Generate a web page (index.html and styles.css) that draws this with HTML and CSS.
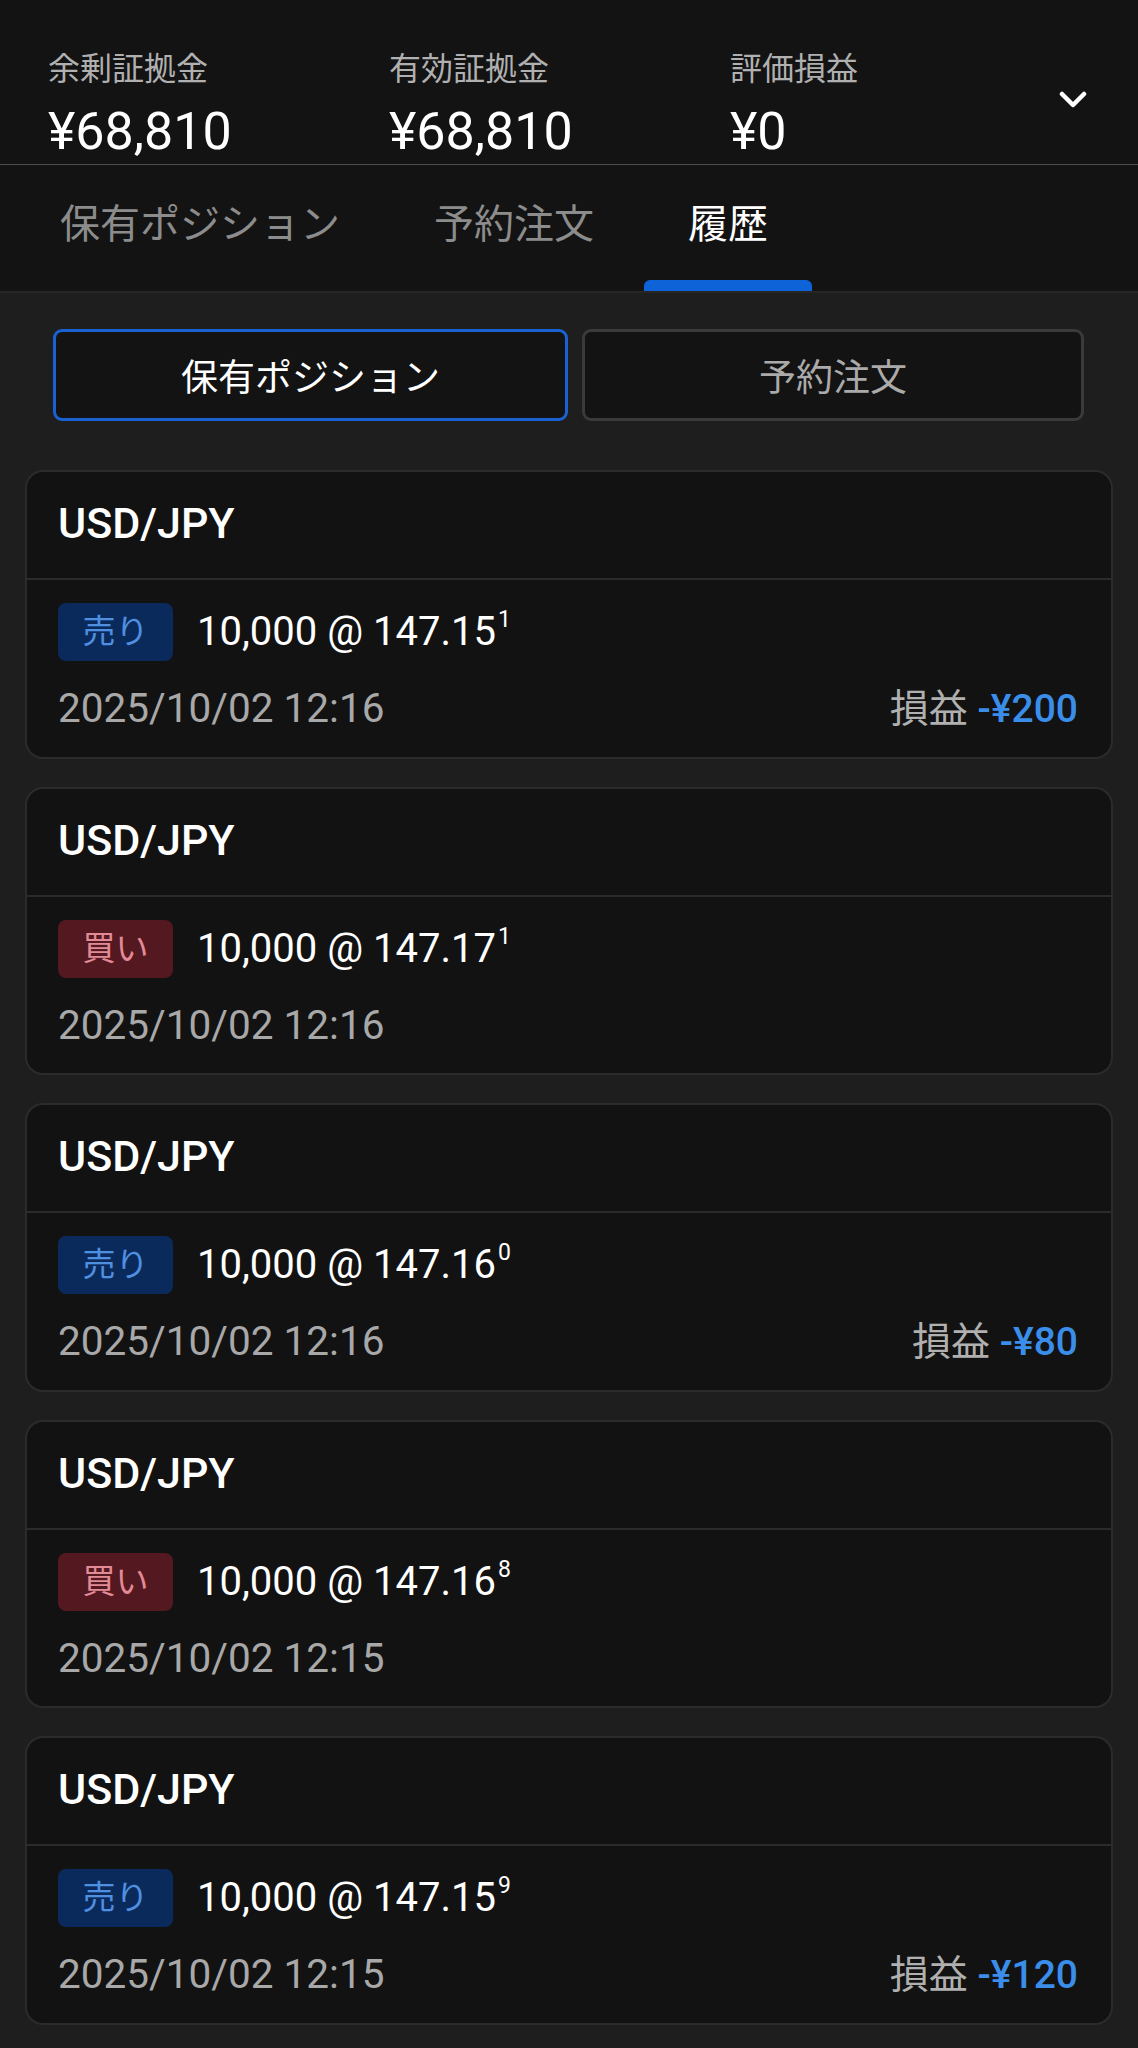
FILE: index.html
```html
<!DOCTYPE html>
<html>
<head>
    <title>履歴</title>
    <link rel="stylesheet" href="styles.css">
</head>
<body>
    <!-- Margin summary -->
    <div class="summary">
        <div class="summary-cols">
            <div class="summary-item">
                <div class="summary-label">余剰証拠金</div>
                <div class="summary-value">¥68,810</div>
            </div>
            <div class="summary-item">
                <div class="summary-label">有効証拠金</div>
                <div class="summary-value">¥68,810</div>
            </div>
            <div class="summary-item">
                <div class="summary-label">評価損益</div>
                <div class="summary-value">¥0</div>
            </div>
        </div>
        <svg class="chevron" width="28" height="18" viewBox="0 0 28 18">
            <polyline points="3,3 14,14 25,3" fill="none" stroke="#fff" stroke-width="4.5" stroke-linecap="round" stroke-linejoin="round"/>
        </svg>
    </div>

    <!-- Main tabs -->
    <div class="tabs">
        <div class="tab">保有ポジション</div>
        <div class="tab">予約注文</div>
        <div class="tab active">履歴</div>
    </div>

    <div class="content">
        <div class="segment">
            <button class="segment-btn selected">保有ポジション</button>
            <button class="segment-btn">予約注文</button>
        </div>

        <div class="card">
            <div class="card-title">USD/JPY</div>
            <div class="card-body">
                <div class="trade-row">
                    <span class="badge sell">売り</span>
                    <span class="price">10,000 @ 147.15<sup>1</sup></span>
                </div>
                <div class="info-row">
                    <span class="date">2025/10/02 12:16</span>
                    <span class="pl">損益 <b>-¥200</b></span>
                </div>
            </div>
        </div>

        <div class="card">
            <div class="card-title">USD/JPY</div>
            <div class="card-body">
                <div class="trade-row">
                    <span class="badge buy">買い</span>
                    <span class="price">10,000 @ 147.17<sup>1</sup></span>
                </div>
                <div class="info-row">
                    <span class="date">2025/10/02 12:16</span>
                </div>
            </div>
        </div>

        <div class="card">
            <div class="card-title">USD/JPY</div>
            <div class="card-body">
                <div class="trade-row">
                    <span class="badge sell">売り</span>
                    <span class="price">10,000 @ 147.16<sup>0</sup></span>
                </div>
                <div class="info-row">
                    <span class="date">2025/10/02 12:16</span>
                    <span class="pl">損益 <b>-¥80</b></span>
                </div>
            </div>
        </div>

        <div class="card">
            <div class="card-title">USD/JPY</div>
            <div class="card-body">
                <div class="trade-row">
                    <span class="badge buy">買い</span>
                    <span class="price">10,000 @ 147.16<sup>8</sup></span>
                </div>
                <div class="info-row">
                    <span class="date">2025/10/02 12:15</span>
                </div>
            </div>
        </div>

        <div class="card">
            <div class="card-title">USD/JPY</div>
            <div class="card-body">
                <div class="trade-row">
                    <span class="badge sell">売り</span>
                    <span class="price">10,000 @ 147.15<sup>9</sup></span>
                </div>
                <div class="info-row">
                    <span class="date">2025/10/02 12:15</span>
                    <span class="pl">損益 <b>-¥120</b></span>
                </div>
            </div>
        </div>
    </div>
</body>
</html>
```

FILE: styles.css
```css
body {
    margin: 0;
    background-color: #1e1e1e;
    color: #fff;
    font-family: Roboto, "Noto Sans CJK JP", sans-serif;
}
.summary {
    display: flex;
    align-items: center;
    background-color: #131313;
    padding: 49px 51px 2px 48px;
    border-bottom: 1px solid #4d4d4d;
}
.summary-cols {
    flex: 1;
    display: grid;
    grid-template-columns: 341px 341px 1fr;
}
.summary-label {
    font-size: 32px;
    line-height: 40px;
    color: #b0b0b0;
}
.summary-value {
    margin-top: 13px;
    font-size: 52px;
    line-height: 60px;
}
.chevron {
    margin-top: -12px;
}
.tabs {
    display: flex;
    height: 126px;
    padding-left: 13px;
    background-color: #131313;
    border-bottom: 2px solid #262626;
}
.tab {
    display: flex;
    flex-direction: column;
    padding: 40px 47px 0;
    font-size: 40px;
    line-height: 40px;
    color: #8c8c8c;
}
.tab.active {
    color: #fff;
}
.tab.active::after {
    content: "";
    display: block;
    margin: auto -44px 0;
    height: 11px;
    border-radius: 6px 6px 0 0;
    background-color: #0f63d8;
}
.content {
    padding: 36px 25px 30px 25px;
}
.segment {
    display: grid;
    grid-template-columns: 515px 1fr;
    gap: 14px;
    margin: 0 29px 49px 28px;
}
.segment-btn {
    height: 92px;
    border: 3px solid #3a3a3a;
    border-radius: 9px;
    background-color: #131313;
    color: #aaa;
    font-family: Roboto, "Noto Sans CJK JP", sans-serif;
    font-size: 37px;
    padding: 0;
}
.segment-btn.selected {
    border-color: #1a62d2;
    color: #fff;
}
.card {
    background-color: #121212;
    border: 2px solid #2b2b2b;
    border-radius: 18px;
    margin-bottom: 28px;
}
.card-title {
    padding: 26px 31px 30px;
    font-size: 43px;
    line-height: 50px;
    font-weight: 500;
    border-bottom: 2px solid #2b2b2b;
}
.card-body {
    padding: 23px 33px 24px 31px;
}
.trade-row {
    display: flex;
    align-items: center;
}
.badge {
    width: 115px;
    height: 58px;
    border-radius: 8px;
    text-align: center;
    font-size: 33px;
    line-height: 58px;
}
.badge.sell {
    background-color: #0b2a5c;
    color: #4f8fe0;
}
.badge.buy {
    background-color: #541820;
    color: #e28a96;
}
.price {
    margin-left: 24px;
    font-size: 40px;
    line-height: 58px;
}
.price sup {
    font-size: 23px;
    line-height: 0;
    vertical-align: 18px;
    margin-left: 2px;
}
.info-row {
    display: flex;
    justify-content: space-between;
    align-items: baseline;
    margin-top: 23px;
    font-size: 40.5px;
    line-height: 48px;
}
.date {
    color: #a8a8a8;
}
.pl {
    color: #b0b0b0;
    font-size: 39px;
}
.pl b {
    color: #3a8eea;
    font-weight: 500;
}
```
